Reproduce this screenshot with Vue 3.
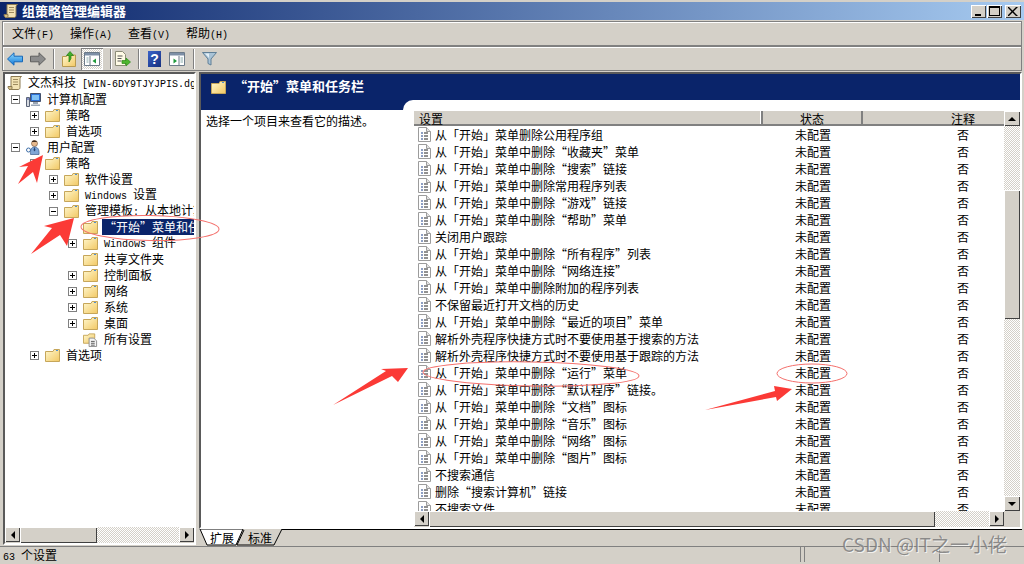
<script setup>
const tree = [
  { text: '计算机配置', depth: 1, box: 'minus', icon: 'computer' },
  { text: '策略', depth: 2, box: 'plus', icon: 'folder' },
  { text: '首选项', depth: 2, box: 'plus', icon: 'folder' },
  { text: '用户配置', depth: 1, box: 'minus', icon: 'user' },
  { text: '策略', depth: 2, box: 'minus', icon: 'folder' },
  { text: '软件设置', depth: 3, box: 'plus', icon: 'folder' },
  { text: 'Windows 设置', depth: 3, box: 'plus', icon: 'folder' },
  { text: '管理模板: 从本地计算机检索的策略定义', depth: 3, box: 'minus', icon: 'folder' },
  { text: '“开始”菜单和任务栏', depth: 4, box: '', icon: 'folder', sel: true },
  { text: 'Windows 组件', depth: 4, box: 'plus', icon: 'folder' },
  { text: '共享文件夹', depth: 4, box: '', icon: 'folder' },
  { text: '控制面板', depth: 4, box: 'plus', icon: 'folder' },
  { text: '网络', depth: 4, box: 'plus', icon: 'folder' },
  { text: '系统', depth: 4, box: 'plus', icon: 'folder' },
  { text: '桌面', depth: 4, box: 'plus', icon: 'folder' },
  { text: '所有设置', depth: 4, box: '', icon: 'allset' },
  { text: '首选项', depth: 2, box: 'plus', icon: 'folder' }
]

const rows = [
  '从「开始」菜单删除公用程序组',
  '从「开始」菜单中删除“收藏夹”菜单',
  '从「开始」菜单中删除“搜索”链接',
  '从「开始」菜单中删除常用程序列表',
  '从「开始」菜单中删除“游戏”链接',
  '从「开始」菜单中删除“帮助”菜单',
  '关闭用户跟踪',
  '从「开始」菜单中删除“所有程序”列表',
  '从「开始」菜单中删除“网络连接”',
  '从「开始」菜单中删除附加的程序列表',
  '不保留最近打开文档的历史',
  '从「开始」菜单中删除“最近的项目”菜单',
  '解析外壳程序快捷方式时不要使用基于搜索的方法',
  '解析外壳程序快捷方式时不要使用基于跟踪的方法',
  '从「开始」菜单中删除“运行”菜单',
  '从「开始」菜单中删除“默认程序”链接。',
  '从「开始」菜单中删除“文档”图标',
  '从「开始」菜单中删除“音乐”图标',
  '从「开始」菜单中删除“网络”图标',
  '从「开始」菜单中删除“图片”图标',
  '不搜索通信',
  '删除“搜索计算机”链接',
  '不搜索文件'
]

const menus = [
  ['文件', '(F)'],
  ['操作', '(A)'],
  ['查看', '(V)'],
  ['帮助', '(H)']
]

function parts(text) {
  return text.split(/([A-Za-z0-9 :.\[\]()-]+)/).filter(Boolean).map((t) => ({
    t,
    latin: /^[A-Za-z0-9 :.\[\]()-]+$/.test(t)
  }))
}
</script>

<template>
  <div class="window">
    <svg class="defs" aria-hidden="true">
      <defs>
        <linearGradient id="fg" x1="0" y1="0" x2="1" y2="1">
          <stop offset="0" stop-color="#fff8cf" />
          <stop offset="1" stop-color="#f2c863" />
        </linearGradient>
        <linearGradient id="ab" x1="0" y1="0" x2="0" y2="1">
          <stop offset="0" stop-color="#8fdcff" />
          <stop offset="1" stop-color="#1478d8" />
        </linearGradient>
        <symbol id="folder" viewBox="0 0 15 15">
          <path d="M.5 3.500h7.500l1-2h5.500v12H.5z" fill="url(#fg)" stroke="#c6a65a" />
          <path d="M11 2h2v1h-2z" fill="#4f8fd0" />
        </symbol>
        <symbol id="doc" viewBox="0 0 13 15">
          <path d="M.5.500h8l4 4v10H.5z" fill="#fff" stroke="#9c9c9c" />
          <path d="M8.500.500v4h4" fill="#e4e4e4" stroke="#9c9c9c" />
          <path d="M3 6h2M3 9h2M3 12h2" stroke="#1c3f86" />
          <path d="M6 6h4M6 9h4M6 12h4" stroke="#222" />
        </symbol>
        <symbol id="scroll" viewBox="0 0 16 16">
          <path d="M4 1.500h10.500c-1.500 1-1.500 2-1.500 3v8c0 1.500-1 2-2 2H2c1.500-.5 2-1 2-2.500z" fill="#f2e2b4" stroke="#8c7a52" />
          <path d="M6 4.500h5M6 7h5M6 9.500h5" stroke="#9d8a5e" />
          <path d="M1 11.500h4v1.500c0 1-1 1.500-2 1.500s-2-1-2-3z" fill="#d6c08a" stroke="#8c7a52" />
        </symbol>
      </defs>
    </svg>

    <header class="titlebar">
      <svg class="title-icon" width="16" height="16"><use href="#scroll" /></svg>
      <span class="title-text">组策略管理编辑器</span>
      <div class="winbtns">
        <span class="winbtn"><i class="g-min"></i></span>
        <span class="winbtn"><i class="g-max"></i></span>
        <span class="winbtn close">
          <svg width="10" height="9" viewBox="0 0 10 9"><path d="M1 0l3.500 3.500L8 0h2L5.500 4.500 10 9H8L4.500 5.500 1 9H-1l4.500-4.500L-1 0z" fill="#000" /></svg>
        </span>
      </div>
    </header>

    <nav class="bar menubar">
      <span v-for="m in menus" :key="m[0]" class="menu">{{ m[0] }}<span class="latin">{{ m[1] }}</span></span>
    </nav>

    <div class="bar toolbar">
      <svg class="tb" width="16" height="14" viewBox="0 0 16 14"><path d="M.5 7L7 .8v3.400h8.500v5.600H7v3.400z" fill="url(#ab)" stroke="#1667b8" /></svg>
      <svg class="tb ml7" width="16" height="14" viewBox="0 0 16 14"><path d="M15.500 7L9 .8v3.400H.5v5.600H9v3.400z" fill="#8c8c8c" stroke="#5e5e5e" /></svg>
      <i class="sep ml7"></i>
      <svg class="tb ml7" width="14" height="16" viewBox="0 0 14 16">
        <path d="M.5 5.500h4l1-1.500h8v11.500H.5z" fill="url(#fg)" stroke="#b89a50" />
        <path d="M7 11V4.500H4.500L8 .5l3.500 4H9v3z" fill="#43b02a" stroke="#1f7a10" stroke-width=".7" />
      </svg>
      <span class="tb-active ml5">
        <svg width="16" height="14" viewBox="0 0 16 14">
          <path d="M.5.500h15v13H.5z" fill="#fff" stroke="#6c7a88" />
          <path d="M1 1h14v2.500H1z" fill="#7d8fa6" />
          <path d="M6 4v9" stroke="#6c7a88" />
          <path d="M12 6.500v5L8.500 9z" fill="#1f9a3a" />
          <path d="M2.500 6h2M2.500 8h2M2.500 10h2" stroke="#8aa" />
        </svg>
      </span>
      <i class="sep ml7"></i>
      <svg class="tb ml3" width="16" height="16" viewBox="0 0 16 16">
        <path d="M.5.500h7l3 3v11H.5z" fill="#fffbe6" stroke="#8c8c78" />
        <path d="M2.500 5h5M2.500 7.500h4M2.500 10h4" stroke="#555" />
        <path d="M7 9.500h4V7l4.500 4-4.500 4v-2.500H7z" fill="#4db52e" stroke="#2b8a17" stroke-width=".7" />
      </svg>
      <i class="sep ml7"></i>
      <span class="help ml8">?</span>
      <svg class="tb ml8" width="16" height="14" viewBox="0 0 16 14">
        <path d="M.5.500h15v13H.5z" fill="#fff" stroke="#6c7a88" />
        <path d="M1 1h14v2.500H1z" fill="#7d8fa6" />
        <path d="M10 4v9" stroke="#6c7a88" />
        <path d="M4.500 6.500v5L8 9z" fill="#1f9a3a" />
        <path d="M11.500 6h2.500M11.500 8h2.500M11.500 10h2.500" stroke="#8aa" />
      </svg>
      <i class="sep ml8"></i>
      <svg class="tb ml7" width="15" height="15" viewBox="0 0 15 15">
        <path d="M.5 1.500h14L9 8v6l-3-1.500V8z" fill="#a9c3d6" stroke="#5f7f97" />
        <path d="M3 2.500h4L7 7z" fill="#e3eff6" />
      </svg>
    </div>

    <main class="main">
      <section class="left">
        <div class="tree">
          <div class="tree-row root">
            <svg class="root-icon" width="16" height="16"><use href="#scroll" /></svg>
            <span class="tree-text"><template v-for="(p, i) in parts('文杰科技 [WIN-6DY9TJYJPIS.dgpm.local]')" :key="i"><span :class="{ latin: p.latin }">{{ p.t }}</span></template></span>
          </div>
          <div v-for="(n, i) in tree" :key="i" class="tree-row" :class="'d' + n.depth">
            <span class="box" :class="{ none: !n.box }">
              <i v-if="n.box" class="h"></i>
              <i v-if="n.box === 'plus'" class="v"></i>
            </span>
            <svg v-if="n.icon === 'folder'" class="node-icon" width="15" height="15"><use href="#folder" /></svg>
            <svg v-else-if="n.icon === 'computer'" class="node-icon" width="15" height="15" viewBox="0 0 15 15">
              <path d="M4.500 1.500h10v8h-10z" fill="#2b6fd6" stroke="#44506a" />
              <path d="M6 3h7v5H6z" fill="#7fc0f4" />
              <path d="M7 10h5v2H7zM5 12.500h9V14H5z" fill="#9aa6b6" />
              <path d="M.5 5.500h3v9h-3z" fill="#d6dae0" stroke="#5a6478" />
              <path d="M1 7h2" stroke="#34a" />
            </svg>
            <svg v-else-if="n.icon === 'user'" class="node-icon" width="15" height="15" viewBox="0 0 15 15">
              <circle cx="8.500" cy="3.500" r="3" fill="#e8b98c" stroke="#6d4a2f" stroke-width=".6" />
              <path d="M6 1.500c1-1.500 4-1.500 5 .5H6z" fill="#3c2a1c" />
              <path d="M4.500 14.500c-.5-5 1-7.500 4-7.500s5 2 4.500 7.500z" fill="#7fa6d6" stroke="#3f5f8c" stroke-width=".7" />
              <path d="M8.500 7l-1 3 1 1.500 1-1.500z" fill="#24406e" />
              <circle cx="2.500" cy="10" r="2" fill="none" stroke="#3f6fa8" />
            </svg>
            <svg v-else class="node-icon" width="15" height="15" viewBox="0 0 16 16">
              <path d="M.5 3.500h5l1-1.500h6v5h-4v5h-8z" fill="url(#fg)" stroke="#c6a65a" />
              <path d="M6.500 6.500h5l3 3v6h-8z" fill="#f4f4f4" stroke="#8c8c8c" />
              <path d="M8.500 10h4M8.500 12h4M8.500 14h4" stroke="#555" />
            </svg>
            <span class="tree-text" :class="{ sel: n.sel }"><template v-for="(p, j) in parts(n.text)" :key="j"><span :class="{ latin: p.latin }">{{ p.t }}</span></template></span>
          </div>
        </div>
        <div class="hscroll">
          <span class="sb-btn"><i class="tri-l"></i></span>
          <span class="thumb left-thumb"></span>
          <span class="track"></span>
          <span class="sb-btn"><i class="tri-r"></i></span>
        </div>
      </section>

      <section class="right">
        <div class="panel">
          <div class="panel-head">
            <svg class="head-folder" width="15" height="15"><use href="#folder" /></svg>
            <span class="head-title">“开始”菜单和任务栏</span>
          </div>
          <div class="panel-body">
            <div class="desc">
              <div class="desc-band"></div>
              <p class="desc-text">选择一个项目来查看它的描述。</p>
            </div>
            <div class="list-wrap">
              <div class="list-white">
                <div class="list-top">
                  <div class="list-main">
                    <div class="col-head">
                      <span class="ch ch1">设置</span>
                      <span class="ch ch2">状态</span>
                      <span class="ch ch3">注释</span>
                    </div>
                    <div class="rows">
                      <div v-for="r in rows" :key="r" class="row">
                        <span class="c1">
                          <svg class="doc" width="13" height="15"><use href="#doc" /></svg>
                          <span>{{ r }}</span>
                        </span>
                        <span class="c2">未配置</span>
                        <span class="c3">否</span>
                      </div>
                    </div>
                  </div>
                  <div class="vscroll">
                    <span class="sb-btn"><i class="tri-u"></i></span>
                    <span class="track t1"></span>
                    <span class="thumb v-thumb"></span>
                    <span class="track"></span>
                    <span class="sb-btn"><i class="tri-d"></i></span>
                  </div>
                </div>
                <div class="hscroll list-h">
                  <span class="sb-btn"><i class="tri-l"></i></span>
                  <span class="thumb list-thumb"></span>
                  <span class="track"></span>
                  <span class="sb-btn"><i class="tri-r"></i></span>
                  <span class="corner"></span>
                </div>
              </div>
            </div>
          </div>
        </div>
        <div class="tabs">
          <svg class="tab-art" width="823" height="18" viewBox="0 0 823 18">
            <path d="M1 0l7 16h29l7-16z" fill="#fff" stroke="#000" />
            <path d="M45 1l-7 15h37l8-16" fill="#d4d0c8" stroke="#000" />
            <path d="M83 .5h740" stroke="#000" />
          </svg>
          <span class="tab tab-a">扩展</span>
          <span class="tab tab-b">标准</span>
        </div>
      </section>
    </main>

    <footer class="status">
      <span class="st st1"><span class="latin">63 </span>个设置</span>
      <span class="st st2"></span>
      <span class="st st3"></span>
    </footer>

    <svg class="annot" width="1024" height="564" viewBox="0 0 1024 564" aria-hidden="true">
      <g fill="#fb3a36">
        <path d="M43 155L37 183 33 172 18 184 28 166 19 167z" />
        <path d="M74 218L67 246 60 235 31 254 52 228 44 226z" />
        <path d="M408 368L398 382 392 376 333 405 386 371 381 369z" />
        <path d="M792 389L777 401 776 397 705 410 775 391 774 386z" />
      </g>
      <g fill="none" stroke="#f4706c" stroke-width="1">
        <ellipse cx="150" cy="228" rx="69" ry="12.500" transform="rotate(1 150 228)" />
        <ellipse cx="531" cy="374" rx="108" ry="12" transform="rotate(1 531 374)" />
        <ellipse cx="812" cy="373.500" rx="35" ry="9.500" />
      </g>
    </svg>
    <span class="watermark">CSDN @IT之一小佬</span>
  </div>
</template>

<style>
html, body { margin: 0; padding: 0; overflow: hidden; background: #d4d0c8; }
</style>

<style scoped>
.window {
  position: relative;
  width: 1024px;
  height: 564px;
  overflow: hidden;
  background: #d4d0c8;
  font-family: "Noto Sans CJK SC", "Noto Sans", sans-serif;
  font-size: 12px;
  line-height: 16px;
  color: #000;
  text-spacing-trim: space-all;
  display: flex;
  flex-direction: column;
}
.defs { position: absolute; width: 0; height: 0; }
.latin { font-family: "Liberation Mono", monospace; font-size: 10px; }

.titlebar {
  margin-top: 2px;
  height: 18px;
  flex: none;
  display: flex;
  align-items: center;
  padding-left: 3px;
  background: linear-gradient(90deg, #0a246a, #a6caf0);
  box-sizing: border-box;
}
.title-icon { flex: none; }
.title-text { margin-left: 3px; color: #fff; font-weight: 700; font-size: 13px; }
.winbtns { margin-left: auto; margin-right: 3px; display: flex; }
.winbtn {
  width: 15px;
  height: 13px;
  margin-left: 1px;
  background: #d4d0c8;
  box-shadow: inset 1px 1px #fff, inset -1px -1px #404040;
  display: flex;
  align-items: center;
  justify-content: center;
  position: relative;
}
.winbtn.close { margin-left: 3px; width: 16px; }
.g-min { width: 6px; height: 2px; background: #000; margin-top: 7px; margin-right: 2px; }
.g-max { width: 9px; height: 7px; border: 1px solid #000; border-top-width: 2px; }

.bar {
  flex: none;
  box-sizing: border-box;
  margin: 0 2px 0 2px;
  height: 25px;
  border: 1px solid #808080;
  box-shadow: inset 1px 1px #fff;
  display: flex;
  align-items: center;
}
.menubar { margin-top: 1px; padding-left: 9px; padding-top: 2px; }
.menu { width: 58px; flex: none; white-space: nowrap; }
.toolbar { padding-left: 4px; }
.tb { flex: none; display: block; }
.ml3 { margin-left: 3px; }
.ml5 { margin-left: 5px; }
.ml7 { margin-left: 7px; }
.ml8 { margin-left: 8px; }
.sep { width: 1px; height: 20px; background: #808080; border-right: 1px solid #fff; flex: none; }
.tb-active {
  width: 22px;
  height: 22px;
  flex: none;
  box-sizing: border-box;
  display: flex;
  align-items: center;
  justify-content: center;
  background: repeating-conic-gradient(#d4d0c8 0 25%, #fff 0 50%) 0 0 / 2px 2px;
  box-shadow: inset 1px 1px #808080, inset -1px -1px #fff;
}
.help {
  width: 13px;
  height: 16px;
  flex: none;
  background: linear-gradient(135deg, #3a62c8, #16307e);
  color: #fff;
  font-family: "Liberation Sans", sans-serif;
  font-weight: 700;
  font-size: 14px;
  line-height: 16px;
  text-align: center;
}

.main { flex: none; height: 475px; display: flex; padding-top: 1px; box-sizing: border-box; }

.left {
  flex: none;
  margin-left: 3px;
  width: 193px;
  height: 473px;
  box-sizing: border-box;
  border: 2px solid;
  border-color: #5a5a5a #fff #fff #5a5a5a;
  display: flex;
  flex-direction: column;
  background: #fff;
}
.tree { height: 453px; overflow: hidden; flex: none; padding-top: 1px; box-sizing: border-box; }
.tree-row { display: flex; align-items: center; height: 16px; white-space: nowrap; }
.root { padding-left: 2px; }
.root-icon { flex: none; }
.root .tree-text { margin-left: 5px; }
.d1 { padding-left: 6px; }
.d2 { padding-left: 25px; }
.d3 { padding-left: 44px; }
.d4 { padding-left: 63px; }
.box {
  flex: none;
  width: 9px;
  height: 9px;
  box-sizing: border-box;
  border: 1px solid #808080;
  position: relative;
  margin-right: 6px;
  background: #fff;
}
.box.none { border-color: transparent; background: transparent; }
.box .h { position: absolute; left: 1px; top: 3px; width: 5px; height: 1px; background: #000; }
.box .v { position: absolute; left: 3px; top: 1px; width: 1px; height: 5px; background: #000; }
.node-icon { flex: none; margin-right: 6px; }
.tree-text { flex: none; }
.sel { background: #0a246a; color: #fff; margin-left: -2px; padding: 0 2px; }

.hscroll { display: flex; height: 16px; flex: none; background: #d4d0c8; }
.sb-btn {
  flex: none;
  width: 15px;
  height: 15px;
  background: #d4d0c8;
  box-shadow: inset 1px 1px #fff, inset -1px -1px #404040;
  display: flex;
  align-items: center;
  justify-content: center;
}
.thumb {
  flex: none;
  background: #d4d0c8;
  box-shadow: inset 1px 1px #fff, inset -1px -1px #404040;
}
.left-thumb { width: 77px; }
.list-thumb { width: 506px; }
.track { flex: 1; background: repeating-conic-gradient(#d4d0c8 0 25%, #fff 0 50%) 0 0 / 2px 2px; }
.tri-l, .tri-r, .tri-u, .tri-d { width: 0; height: 0; border: 4px solid transparent; }
.tri-l { border-right-color: #000; margin-right: 4px; }
.tri-r { border-left-color: #000; margin-left: 4px; }
.tri-u { border-bottom-color: #000; margin-bottom: 4px; }
.tri-d { border-top-color: #000; margin-top: 4px; }

.right { flex: none; margin-left: 3px; width: 823px; display: flex; flex-direction: column; }
.panel {
  flex: none;
  width: 823px;
  height: 457px;
  box-sizing: border-box;
  border: 2px solid;
  border-color: #5a5a5a #fff #fff #5a5a5a;
  display: flex;
  flex-direction: column;
  background: #fff;
}
.panel-head {
  flex: none;
  height: 26px;
  background: #0a246a;
  display: flex;
  align-items: center;
  padding-left: 10px;
  color: #fff;
}
.head-folder { flex: none; }
.head-title { margin-left: 8px; margin-bottom: 2px; font-weight: 700; font-size: 13px; }
.panel-body { flex: 1; display: flex; min-height: 0; }
.desc { flex: none; width: 202px; background: #fff; }
.desc-band { height: 10px; background: #0a246a; }
.desc-text { margin: 3px 0 0 5px; line-height: 16px; }
.list-wrap { flex: 1; background: #0a246a; display: flex; }
.list-white {
  flex: 1;
  background: #fff;
  border-top-left-radius: 10px;
  padding: 11px 0 0 11px;
  display: flex;
  flex-direction: column;
  min-width: 0;
}
.list-top { flex: none; height: 400px; display: flex; }
.list-main { flex: none; width: 590px; display: flex; flex-direction: column; }
.col-head {
  flex: none;
  height: 15px;
  display: flex;
  background: #d4d0c8;
  border-bottom: 2px solid #808080;
  box-sizing: border-box;
  line-height: 15px;
}
.ch { box-sizing: border-box; flex: none; height: 13px; overflow: visible; }
.ch1 { width: 349px; padding-left: 5px; border-right: 2px solid #808080; box-shadow: inset -1px 0 #fff; }
.ch2 { width: 100px; padding-left: 37px; border-right: 2px solid #808080; }
.ch3 { width: 141px; padding-left: 88px; }
.rows { flex: 1; overflow: hidden; }
.row { display: flex; height: 17px; line-height: 17px; white-space: nowrap; }
.c1 { flex: none; width: 381px; box-sizing: border-box; padding-left: 4px; display: flex; align-items: center; }
.doc { flex: none; margin-right: 4px; }
.c2 { flex: none; width: 162px; }
.c3 { flex: none; }
.vscroll { flex: none; width: 16px; display: flex; flex-direction: column; }
.vscroll .sb-btn { width: 16px; }
.t1 { flex: none; height: 64px; }
.v-thumb { height: 129px; }
.list-h { width: 606px; }
.corner { flex: none; width: 16px; background: #d4d0c8; }

.tabs { position: relative; flex: none; height: 18px; display: flex; }
.tab-art { position: absolute; left: 0; top: 0; }
.tab { position: relative; flex: none; line-height: 17px; }
.tab-a { margin-left: 11px; }
.tab-b { margin-left: 14px; }

.status {
  flex: none;
  height: 16px;
  display: flex;
  border-top: 1px solid #808080;
  box-sizing: border-box;
  line-height: 16px;
}
.st { box-sizing: border-box; height: 15px; }
.st1 { width: 801px; padding-left: 3px; border-right: 1px solid #808080; }
.st2 { width: 136px; margin-left: 3px; border-left: 1px solid #808080; border-right: 1px solid #808080; }
.st3 { flex: 1; }

.annot { position: absolute; left: 0; top: 0; pointer-events: none; }
.watermark {
  position: absolute;
  left: 842px;
  top: 532px;
  font-size: 19px;
  line-height: 24px;
  color: rgba(125, 125, 125, 0.85);
  text-shadow: 1px 1px 0 rgba(255, 255, 255, 0.7);
  white-space: nowrap;
}
</style>
